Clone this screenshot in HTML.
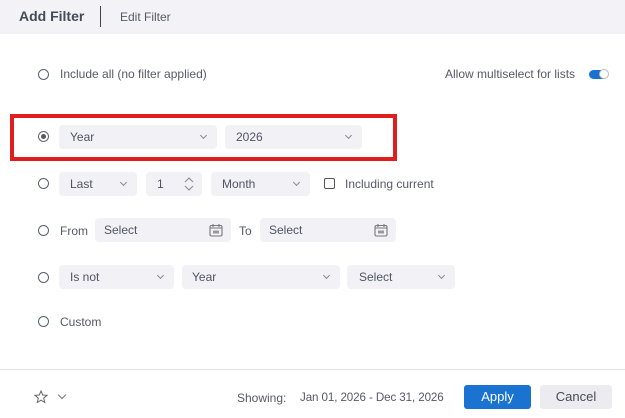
<!DOCTYPE html>
<html><head><style>
*{margin:0;padding:0;box-sizing:border-box}
body{width:625px;height:418px;background:#fff;font-family:"Liberation Sans",sans-serif;font-size:12px;color:#555a66;position:relative;overflow:hidden}
.a{position:absolute}
.hdr{left:0;top:0;width:625px;height:34px;background:#f3f3f7}
.box{position:absolute;background:#f2f2f6;border-radius:4px;height:24px;line-height:25px;padding-left:11px;color:#4f5462;font-size:12px}
.chev{position:absolute;right:11px;top:8px;width:5px;height:5px;border-right:1px solid #888;border-bottom:1px solid #888;transform:rotate(45deg)}
.radio{position:absolute;width:11px;height:11px;border:1.3px solid #5a5f6b;border-radius:50%}
.t{position:absolute;font-size:12px;color:#555a66;white-space:nowrap}
.cal{position:absolute;right:8px;top:5px}
</style></head><body>
<div class="a hdr"></div>
<div class="t" style="left:19px;top:8px;font-size:14px;font-weight:bold;color:#444a56">Add Filter</div>
<div class="a" style="left:100px;top:6px;width:1px;height:21px;background:#444"></div>
<div class="t" style="left:120px;top:10px;font-size:12px">Edit Filter</div>

<div class="radio" style="left:38px;top:69px"></div>
<div class="t" style="left:60px;top:67px">Include all (no filter applied)</div>
<div class="t" style="left:445px;top:67px">Allow multiselect for lists</div>
<div class="a" style="left:589px;top:70px;width:19px;height:9px;border-radius:5px;background:#1a73d1"></div>
<div class="a" style="left:599px;top:69px;width:10px;height:10px;border-radius:50%;background:#fff;border:1px solid #bbb"></div>

<div class="a" style="left:10px;top:114px;width:387px;height:47px;border:4px solid #e01e1e"></div>
<div class="radio" style="left:38px;top:131px;border-color:#666"></div>
<div class="a" style="left:41px;top:134px;width:5px;height:5px;border-radius:50%;background:#555a66"></div>
<div class="box" style="left:59px;top:125px;width:158px">Year<span class="chev"></span></div>
<div class="box" style="left:225px;top:125px;width:137px">2026<span class="chev"></span></div>

<div class="radio" style="left:38px;top:178px"></div>
<div class="box" style="left:59px;top:172px;width:78px">Last<span class="chev"></span></div>
<div class="box" style="left:146px;top:172px;width:56px">1<svg class="a" style="right:8px;top:5px" width="10" height="14" viewBox="0 0 10 14"><path d="M1 5 L5 1 L9 5 M1 9 L5 13 L9 9" fill="none" stroke="#888" stroke-width="1"/></svg></div>
<div class="box" style="left:211px;top:172px;width:99px">Month<span class="chev"></span></div>
<div class="a" style="left:324px;top:178px;width:11px;height:11px;border:1.3px solid #555;border-radius:2px"></div>
<div class="t" style="left:345px;top:177px">Including current</div>

<div class="radio" style="left:38px;top:225px"></div>
<div class="t" style="left:60px;top:224px">From</div>
<div class="box" style="left:95px;top:218px;width:136px;padding-left:9px">Select<svg class="cal" width="14" height="14" viewBox="0 0 14 14"><rect x="1" y="2.5" width="12" height="10.5" rx="1.5" fill="none" stroke="#777" stroke-width="1.1"/><path d="M4 1v3M10 1v3M1 5h12" stroke="#777" stroke-width="1.1"/><rect x="4" y="7.5" width="6" height="3" fill="#999"/></svg></div>
<div class="t" style="left:239px;top:224px">To</div>
<div class="box" style="left:260px;top:218px;width:136px;padding-left:9px">Select<svg class="cal" width="14" height="14" viewBox="0 0 14 14"><rect x="1" y="2.5" width="12" height="10.5" rx="1.5" fill="none" stroke="#777" stroke-width="1.1"/><path d="M4 1v3M10 1v3M1 5h12" stroke="#777" stroke-width="1.1"/><rect x="4" y="7.5" width="6" height="3" fill="#999"/></svg></div>

<div class="radio" style="left:38px;top:272px"></div>
<div class="box" style="left:59px;top:265px;width:115px">Is not<span class="chev"></span></div>
<div class="box" style="left:182px;top:265px;width:158px;padding-left:10px">Year<span class="chev"></span></div>
<div class="box" style="left:347px;top:265px;width:108px;padding-left:12px">Select<span class="chev"></span></div>

<div class="radio" style="left:38px;top:316px"></div>
<div class="t" style="left:60px;top:315px">Custom</div>

<div class="a" style="left:0;top:369px;width:625px;height:1px;background:#e2e2e6"></div>
<svg class="a" style="left:34px;top:390px" width="14" height="14" viewBox="0 0 14 14"><path d="M7 1 L8.7 5 L13 5.3 L9.7 8.2 L10.7 12.5 L7 10.2 L3.3 12.5 L4.3 8.2 L1 5.3 L5.3 5 Z" fill="none" stroke="#666" stroke-width="1"/></svg>
<div class="a" style="left:59px;top:392px;width:6px;height:6px;border-right:1px solid #777;border-bottom:1px solid #777;transform:rotate(45deg)"></div>
<div class="t" style="left:237px;top:391px;font-size:12px">Showing:</div>
<div class="t" style="left:300px;top:391px;font-size:11.6px;letter-spacing:-0.1px">Jan 01, 2026 - Dec 31, 2026</div>
<div class="a" style="left:464px;top:385px;width:67px;height:24px;border-radius:3px;background:#1a73d1;color:#fff;text-align:center;line-height:24px;font-size:13px">Apply</div>
<div class="a" style="left:540px;top:385px;width:72px;height:24px;border-radius:3px;background:#ececf0;color:#444a56;text-align:center;line-height:24px;font-size:13px">Cancel</div>
</body></html>
